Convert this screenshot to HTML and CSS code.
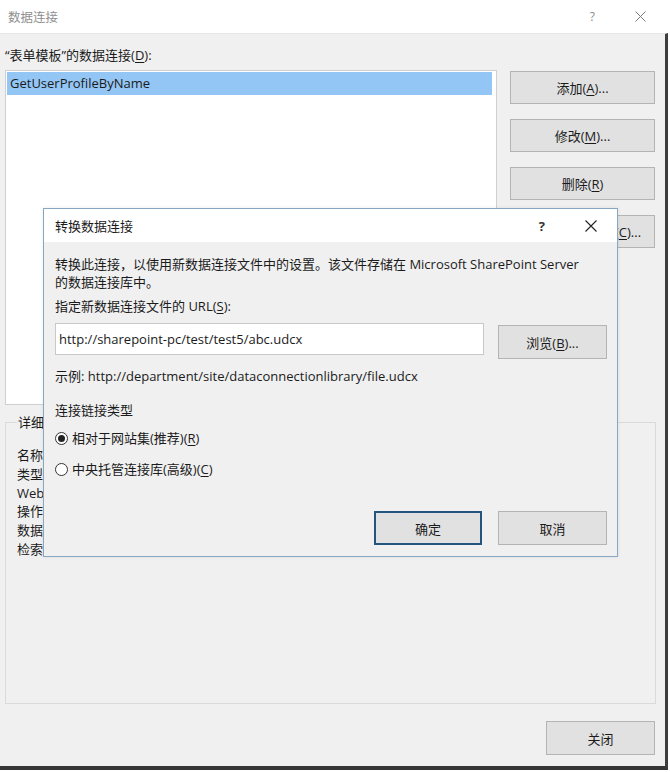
FILE: index.html
```html
<!DOCTYPE html>
<html lang="zh-CN">
<head>
<meta charset="utf-8">
<title>数据连接</title>
<link rel="stylesheet" href="styles.css">
</head>
<body>
<div class="window">
  <div class="titlebar">
    <span class="title">数据连接</span>
    <div class="tb-btns">
      <span class="tb-help">?</span>
      <svg class="tb-close" width="11" height="11" viewBox="0 0 11 11"><path d="M0.5 0.5L10.5 10.5M10.5 0.5L0.5 10.5" stroke="#7a7a7a" stroke-width="1" fill="none"/></svg>
    </div>
  </div>
  <div class="body">
    <div class="list-label">“表单模板”的数据连接(<u>D</u>):</div>
    <div class="top">
      <div class="listbox">
        <div class="item sel">GetUserProfileByName</div>
      </div>
      <div class="side-btns">
        <button class="btn side">添加(<u>A</u>)...</button>
        <button class="btn side">修改(<u>M</u>)...</button>
        <button class="btn side">删除(<u>R</u>)</button>
        <button class="btn side">转换为连接文件(<u>C</u>)...</button>
      </div>
    </div>
    <fieldset class="details">
      <legend>详细</legend>
      <div class="d-line">名称:</div>
      <div class="d-line">类型:</div>
      <div class="d-line">Web:</div>
      <div class="d-line">操作:</div>
      <div class="d-line">数据:</div>
      <div class="d-line">检索:</div>
    </fieldset>
    <div class="footer">
      <button class="btn close-btn">关闭</button>
    </div>
  </div>

  <div class="modal">
    <div class="m-titlebar">
      <span class="m-title">转换数据连接</span>
      <div class="m-btns">
        <span class="m-help">?</span>
        <svg class="m-close" width="12" height="12" viewBox="0 0 12 12"><path d="M0.5 0.5L11.5 11.5M11.5 0.5L0.5 11.5" stroke="#222" stroke-width="1.1" fill="none"/></svg>
      </div>
    </div>
    <div class="m-body">
      <p class="m-desc">转换此连接，以使用新数据连接文件中的设置。该文件存储在 Microsoft SharePoint Server<br>的数据连接库中。</p>
      <div class="m-url-label">指定新数据连接文件的 URL(<u>S</u>):</div>
      <div class="m-url-row">
        <div class="m-input">http://sharepoint-pc/test/test5/abc.udcx</div>
        <button class="btn m-btn browse">浏览(<u>B</u>)...</button>
      </div>
      <div class="m-example">示例: http://department/site/dataconnectionlibrary/file.udcx</div>
      <div class="m-group">连接链接类型</div>
      <div class="m-radio first"><span class="radio checked"></span>相对于网站集(推荐)(<u>R</u>)</div>
      <div class="m-radio"><span class="radio"></span>中央托管连接库(高级)(<u>C</u>)</div>
      <div class="m-actions">
        <button class="btn m-btn ok">确定</button>
        <button class="btn m-btn">取消</button>
      </div>
    </div>
  </div>
</div>
</body>
</html>
```

FILE: styles.css
```css
* { box-sizing: border-box; }
html, body {
  margin: 0;
  padding: 0;
  background: #ffffff;
}
body {
  font-family: "Open Sans", "Noto Sans CJK SC", sans-serif;
  font-size: 13px;
  color: #1b1b1b;
  width: 670px;
  height: 772px;
  overflow: hidden;
}
u { text-decoration: underline; text-underline-offset: 2px; }

.window {
  position: relative;
  width: 668px;
  height: 770px;
  display: flex;
  flex-direction: column;
}

.titlebar {
  height: 33px;
  background: #ffffff;
  display: flex;
  align-items: center;
  justify-content: space-between;
  padding: 0 22px 0 8px;
}
.title {
  color: #8f8f8f;
  font-size: 12.5px;
}
.tb-btns {
  display: flex;
  align-items: center;
  gap: 40px;
}
.tb-help {
  color: #8a8a8a;
  font-size: 12px;
}

.body {
  flex: 1;
  background: #f0f0f0;
  border-top: 1px solid #e6e6e6;
  border-right: 3px solid #3d3d3d;
  border-bottom: 4px solid #353535;
  padding: 0 9px 0 5px;
  display: flex;
  flex-direction: column;
}

.list-label {
  height: 36px;
  line-height: 18px;
  padding-top: 12px;
}

.top {
  display: flex;
  gap: 13px;
}
.listbox {
  width: 492px;
  height: 335px;
  background: #ffffff;
  border: 1px solid #cfcfcf;
  padding: 1px;
}
.item {
  height: 23px;
  line-height: 23px;
  padding-left: 3px;
  margin-right: 3px;
}
.item.sel { background: #93c6f4; }

.side-btns {
  display: flex;
  flex-direction: column;
  gap: 15px;
  padding-top: 1px;
}

.btn {
  font-family: "Open Sans", "Noto Sans CJK SC", sans-serif;
  font-size: 13px;
  color: #1b1b1b;
  background: #e1e1e1;
  border: 1px solid #b4b4b4;
  padding: 0;
  margin: 0;
  white-space: nowrap;
}
.btn.side {
  width: 145px;
  height: 33px;
}

.details {
  margin: 9px 0 0 0;
  width: 651px;
  height: 290px;
  border: 1px solid #dadada;
  padding: 16px 10px 0 11px;
}
.details legend {
  padding: 0 1px;
  margin-left: 0;
  line-height: 16px;
}
.d-line {
  line-height: 18.8px;
  white-space: nowrap;
}

.footer {
  display: flex;
  justify-content: flex-end;
  padding-top: 17px;
  width: 650px;
}
.close-btn {
  width: 109px;
  height: 34px;
}

/* modal dialog overlaid on the window */
.modal {
  position: absolute;
  left: 43px;
  top: 208px;
  width: 575px;
  height: 349px;
  border: 1px solid #86a8c4;
  background: #f0f0f0;
  box-shadow: 0 0 4px rgba(0,0,0,0.08);
  display: flex;
  flex-direction: column;
}
.m-titlebar {
  height: 33px;
  background: #ffffff;
  display: flex;
  align-items: center;
  justify-content: space-between;
  padding: 0 20px 0 11px;
}
.m-title { color: #1b1b1b; }
.m-btns {
  display: flex;
  align-items: center;
  gap: 40px;
}
.m-help {
  font-weight: bold;
  color: #333;
  font-size: 13px;
}

.m-body {
  padding: 13px 10px 0 11px;
  display: flex;
  flex-direction: column;
}
.m-desc {
  margin: 0;
  line-height: 18px;
  white-space: nowrap;
}
.m-url-label {
  margin-top: 6px;
  line-height: 18px;
}
.m-url-row {
  display: flex;
  align-items: flex-start;
  gap: 14px;
  margin-top: 8px;
}
.m-input {
  width: 429px;
  height: 32px;
  background: #ffffff;
  border: 1px solid #c8c8c8;
  line-height: 30px;
  padding-left: 3px;
}
.m-btn {
  width: 109px;
  height: 34px;
}
.browse { margin-top: 2px; }
.m-example {
  margin-top: 8px;
  line-height: 18px;
}
.m-group {
  margin-top: 16px;
  line-height: 18px;
}
.m-radio {
  display: flex;
  align-items: center;
  line-height: 18px;
  margin-top: 13px;
}
.m-radio.first { margin-top: 10px; }
.radio {
  width: 13px;
  height: 13px;
  border: 1px solid #333;
  border-radius: 50%;
  background: #fff;
  margin-right: 4px;
  display: flex;
  align-items: center;
  justify-content: center;
}
.radio.checked::after {
  content: "";
  width: 7px;
  height: 7px;
  border-radius: 50%;
  background: #222;
}
.m-actions {
  display: flex;
  justify-content: flex-end;
  gap: 16px;
  margin-top: 33px;
}
.m-btn.ok {
  width: 108px;
  border: 2px solid #24557f;
}
```
